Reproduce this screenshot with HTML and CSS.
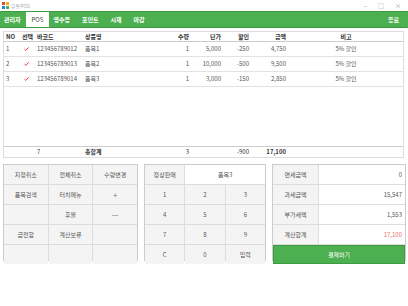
FILE: index.html
```
<!DOCTYPE html>
<html>
<head>
	<meta charset="utf-8">
	<title>유통POS</title>
	<link rel="stylesheet" href="styles.css">
</head>
<body>
	<div class="titlebar">
		<div class="app">
			<svg width="7" height="7" viewBox="0 0 7 7"><rect x="0" y="0" width="3" height="3" fill="#e04a2a"/><rect x="4" y="0" width="3" height="3" fill="#f2b01e"/><rect x="0" y="4" width="3" height="3" fill="#2a7fd0"/><rect x="4" y="4" width="3" height="3" fill="#4caf50"/></svg>
			<span>유통POS</span>
		</div>
		<div class="ctrls"><span>&#8211;</span><span>&#9633;</span><span>&#215;</span></div>
	</div>

	<div class="menubar">
		<div class="tabs">
			<span class="tab">관리자</span>
			<span class="tab on">POS</span>
			<span class="tab">영수증</span>
			<span class="tab">포인트</span>
			<span class="tab">시재</span>
			<span class="tab">마감</span>
		</div>
		<span class="tab">종료</span>
	</div>

	<div class="main">
		<div class="list">
			<div class="row head">
				<span>NO</span><span>선택</span><span>바코드</span><span>상품명</span>
				<span class="r">수량</span><span class="r">단가</span><span class="r">할인</span><span class="r">금액</span><span class="c">비고</span>
			</div>
			<div class="row item">
				<span>1</span><span class="chk"><svg width="5" height="4" viewBox="0 0 5 4"><path d="M0.5 2.2 L1.8 3.4 L4.6 0.4" fill="none" stroke="#e53935" stroke-width="1"/></svg></span><span>123456789012</span><span>품목1</span>
				<span class="r">1</span><span class="r">5,000</span><span class="r">-250</span><span class="r">4,750</span><span class="c">5% 할인</span>
			</div>
			<div class="row item">
				<span>2</span><span class="chk"><svg width="5" height="4" viewBox="0 0 5 4"><path d="M0.5 2.2 L1.8 3.4 L4.6 0.4" fill="none" stroke="#e53935" stroke-width="1"/></svg></span><span>123456789013</span><span>품목2</span>
				<span class="r">1</span><span class="r">10,000</span><span class="r">-500</span><span class="r">9,500</span><span class="c">5% 할인</span>
			</div>
			<div class="row item">
				<span>3</span><span class="chk"><svg width="5" height="4" viewBox="0 0 5 4"><path d="M0.5 2.2 L1.8 3.4 L4.6 0.4" fill="none" stroke="#e53935" stroke-width="1"/></svg></span><span>123456789014</span><span>품목3</span>
				<span class="r">1</span><span class="r">3,000</span><span class="r">-150</span><span class="r">2,850</span><span class="c">5% 할인</span>
			</div>
			<div class="fill"></div>
			<div class="row total">
				<span></span><span></span><span>7</span><span class="b">총합계</span>
				<span class="r">3</span><span></span><span class="r">-900</span><span class="r b">17,100</span><span></span>
			</div>
		</div>

		<div class="bottom">
			<div class="keys fn">
				<span>지정취소</span><span>전체취소</span><span>수량변경</span>
				<span>품목검색</span><span>터치메뉴</span><span class="sym">+</span>
				<span></span><span>후불</span><span class="sym">&#8212;</span>
				<span>금전함</span><span>계산보류</span><span></span>
				<span></span><span></span><span></span>
			</div>

			<div class="keys pad">
				<span>정상판매</span><span class="name">품목3</span>
				<span>1</span><span>2</span><span>3</span>
				<span>4</span><span>5</span><span>6</span>
				<span>7</span><span>8</span><span>9</span>
				<span>C</span><span>0</span><span>입력</span>
			</div>

			<div class="sums">
				<span class="lbl">면세금액</span><span class="val">0</span>
				<span class="lbl">과세금액</span><span class="val">15,547</span>
				<span class="lbl">부가세액</span><span class="val">1,553</span>
				<span class="lbl">계산합계</span><span class="val red">17,100</span>
				<span class="pay">결제하기</span>
			</div>
		</div>
	</div>
</body>
</html>
```

FILE: styles.css
```
* {
	margin: 0;
	padding: 0;
	box-sizing: border-box;
}

body {
	width: 408px;
	height: 306px;
	background: #fff;
	color: #555;
	font: 6px/1 "Noto Sans CJK KR", "Noto Sans", sans-serif;
	overflow: hidden;
}

.titlebar {
	height: 11px;
	display: flex;
	justify-content: space-between;
	align-items: center;
	padding: 0 2px;
	color: #aaa;
	font-size: 5px;
}

.titlebar .app {
	display: flex;
	align-items: center;
	gap: 2px;
}

.titlebar .ctrls {
	display: flex;
	gap: 11px;
	padding-right: 5px;
	font-size: 6px;
	color: #999;
}

.menubar {
	height: 17px;
	display: flex;
	justify-content: space-between;
	align-items: stretch;
	background: #4caf50;
	border-top: 1px solid #3d9a41;
	border-bottom: 1px solid #3d9a41;
	padding: 0 4px;
	color: #fff;
}

.tabs {
	display: flex;
}

.tab {
	display: flex;
	align-items: center;
	padding: 0 5px;
	font-weight: bold;
}

.tabs .tab:first-child {
	padding-left: 0;
}

.tabs .tab:nth-child(n+3) {
	padding: 0 5px 0 4px;
	margin-right: 3px;
}

.tab.on {
	background: #fff;
	color: #444;
	font-weight: normal;
	padding: 0 6px;
}

.main {
	padding: 3px 4px 0 3px;
}

.list {
	height: 127px;
	border: 1px solid #ddd;
	display: flex;
	flex-direction: column;
}

.row {
	display: grid;
	grid-template-columns: 16px 15px 48px 87px 22px 32px 28px 37px 1fr;
	align-items: center;
}

.row span {
	padding-left: 2px;
	white-space: nowrap;
}

.row .r {
	text-align: right;
	padding: 0 3px 0 0;
}

.row .c {
	text-align: center;
	padding: 0;
}

.row.head {
	height: 10px;
	color: #333;
	font-weight: bold;
	border-bottom: 1px solid #ccc;
}

.row.item {
	height: 15px;
	border-bottom: 1px solid #e2e2e2;
}

.row .chk {
	padding-left: 4px;
	display: flex;
	align-items: center;
}

.fill {
	flex: 1;
}

.row.total {
	height: 11px;
	border-top: 1px solid #ccc;
	color: #333;
}

.row .b {
	font-weight: bold;
}

.bottom {
	margin-top: 6px;
	display: grid;
	grid-template-columns: 135px 122px 134px;
	gap: 6px;
}

.keys {
	display: grid;
	grid-template-columns: repeat(3, 1fr);
	grid-auto-rows: 19px;
	border: 1px solid #ccc;
	background: #ddd;
	gap: 1px;
	height: 97px;
}

.keys span {
	display: flex;
	align-items: center;
	justify-content: center;
	background: #f4f4f4;
}

.keys .sym {
	font-size: 8px;
	color: #777;
}

.pad .name {
	grid-column: span 2;
	background: #fff;
}

.sums {
	display: grid;
	grid-template-columns: 45px 1fr;
	grid-auto-rows: 19px;
	gap: 1px;
	background: #ddd;
	border: 1px solid #ccc;
	height: 97px;
}

.sums span {
	display: flex;
	align-items: center;
}

.sums .lbl {
	justify-content: center;
	background: #f4f4f4;
}

.sums .val {
	justify-content: flex-end;
	padding-right: 3px;
	background: #fff;
}

.sums .red {
	color: #f06a6a;
}

.sums .pay {
	grid-column: span 2;
	justify-content: center;
	background: #4caf50;
	color: #fff;
	border: 1px solid #3d9a41;
}
```
